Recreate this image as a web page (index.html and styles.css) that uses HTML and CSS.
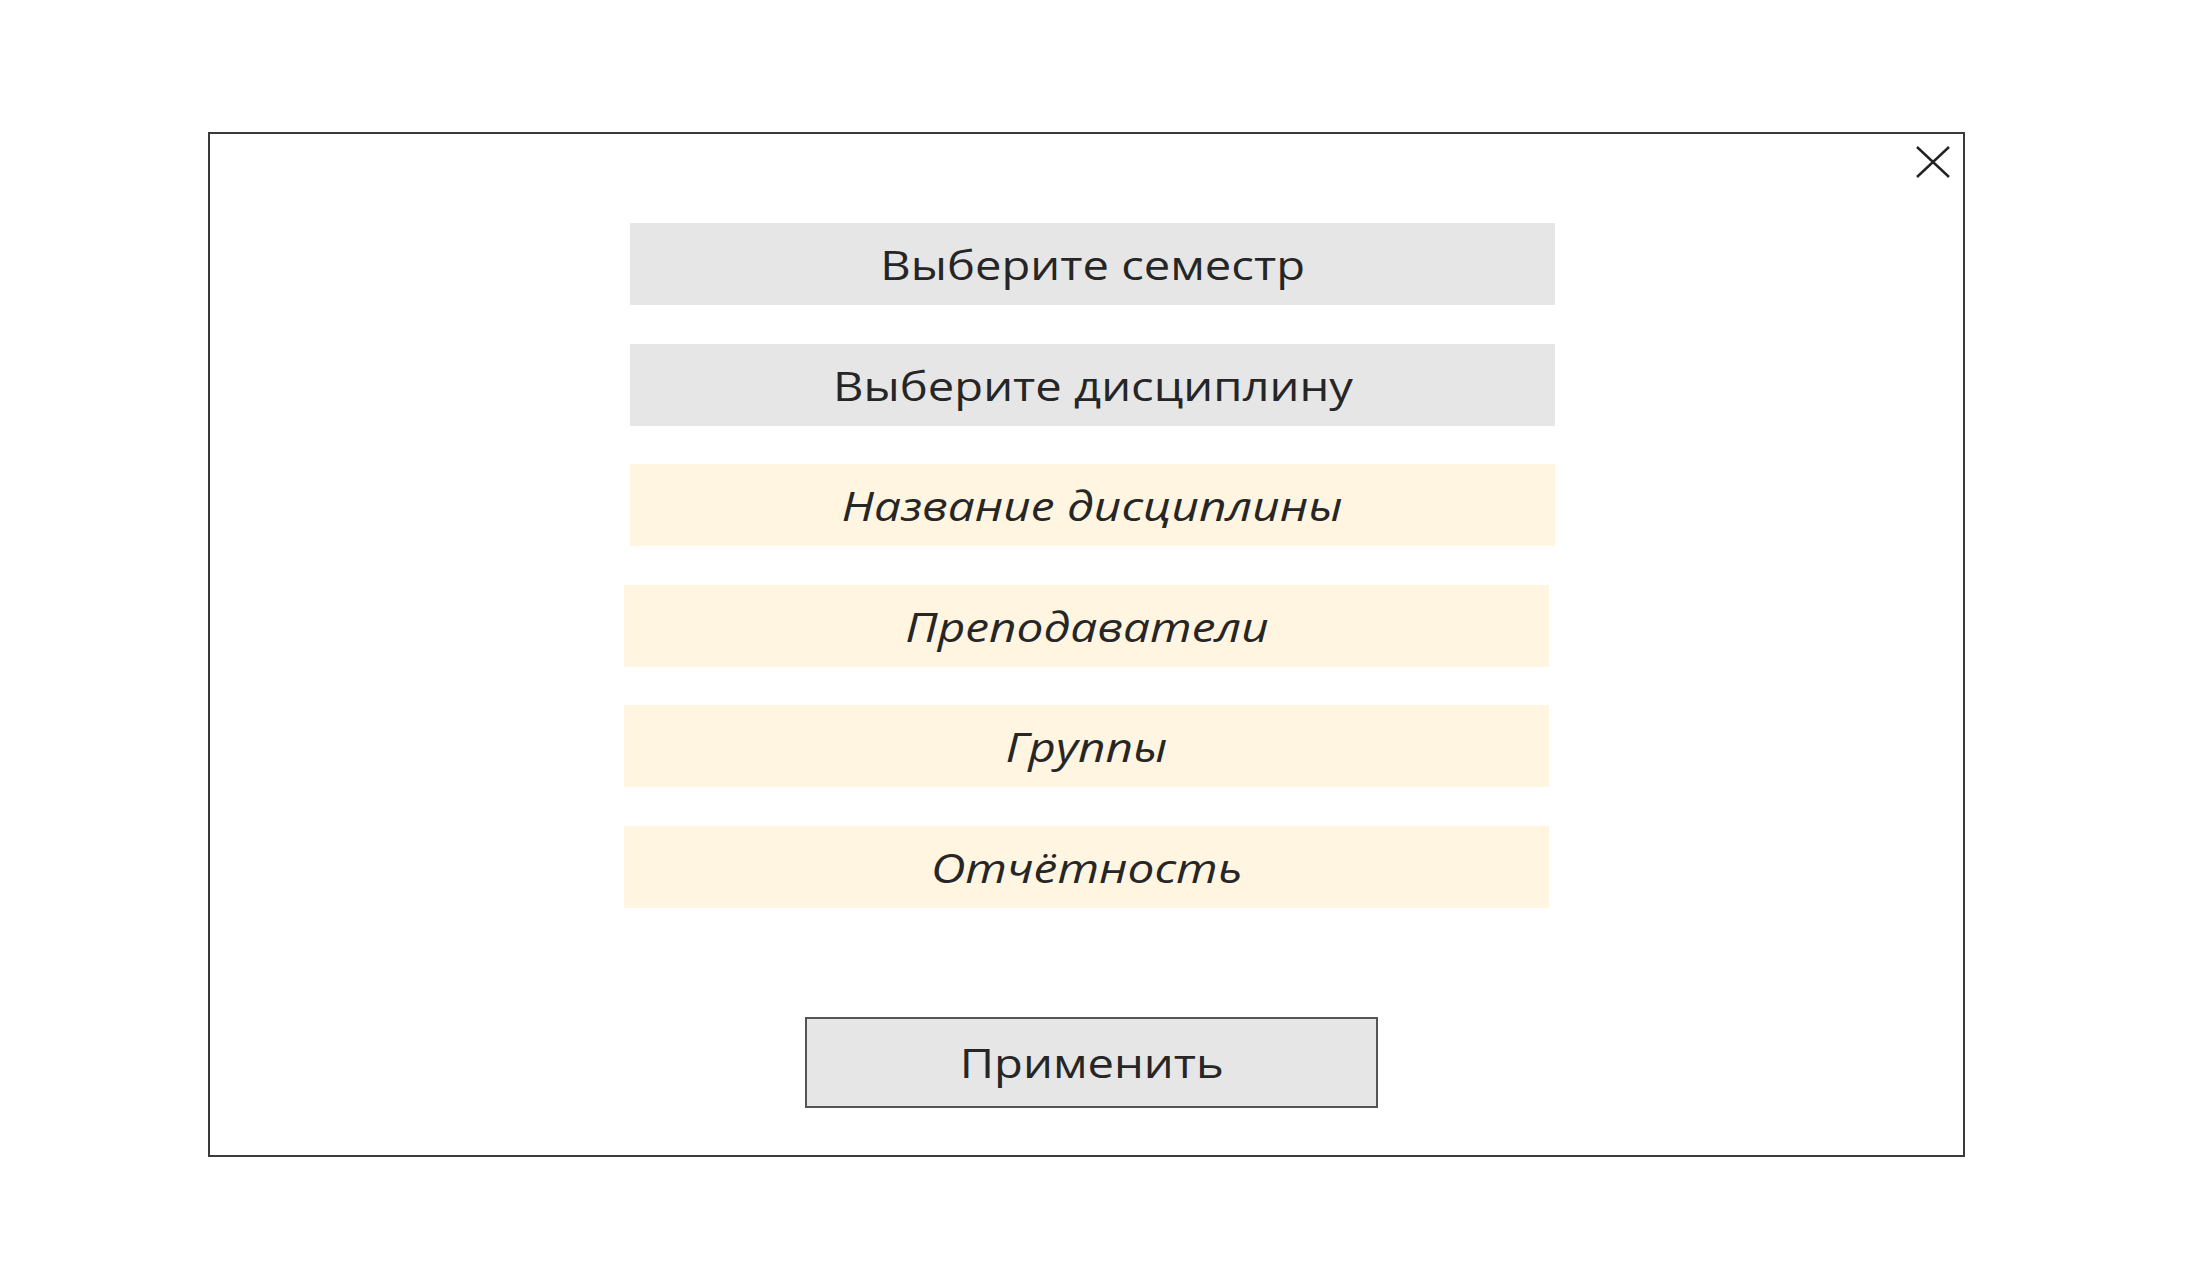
FILE: index.html
```html
<!DOCTYPE html>
<html lang="ru">
<head>
<meta charset="utf-8">
<title>Фильтр</title>
<link rel="stylesheet" href="styles.css">
</head>
<body>
<div class="dialog">
  <button class="close" aria-label="Закрыть">
    <svg width="34" height="32" viewBox="0 0 34 32"><path d="M1 1 L33 31 M33 1 L1 31" stroke="#222" stroke-width="2.4" fill="none"/></svg>
  </button>
  <div class="fields">
    <div class="field select"><span class="label">Выберите семестр</span></div>
    <div class="field select"><span class="label">Выберите дисциплину</span></div>
    <div class="field info"><span class="label">Название дисциплины</span></div>
    <div class="field info shifted"><span class="label">Преподаватели</span></div>
    <div class="field info shifted"><span class="label">Группы</span></div>
    <div class="field info shifted"><span class="label">Отчётность</span></div>
  </div>
  <div class="actions">
    <button class="apply"><span class="label">Применить</span></button>
  </div>
</div>
</body>
</html>
```
FILE: styles.css
```css
html, body {
  margin: 0;
  padding: 0;
  background: #ffffff;
}
body {
  font-family: "Open Sans", "Noto Sans", sans-serif;
  color: #262626;
  padding: 132px 0 0 208px;
}
.dialog {
  position: relative;
  box-sizing: border-box;
  width: 1757px;
  height: 1025px;
  border: 2px solid #3a3a3a;
  background: #ffffff;
}
.close {
  position: absolute;
  top: 12px;
  right: 13px;
  width: 34px;
  height: 32px;
  padding: 0;
  border: 0;
  background: transparent;
  display: flex;
}
.label {
  display: inline-block;
  transform: scaleX(1.15);
  white-space: nowrap;
}
.fields {
  display: flex;
  flex-direction: column;
  gap: 38.6px;
  padding: 89px 0 0 420px;
}
.field {
  width: 925px;
  height: 82px;
  display: flex;
  align-items: center;
  justify-content: center;
  font-size: 41px;
  color: #262626;
}
.select {
  background: #e6e6e6;
}
.info {
  background: #fff5e1;
  font-style: italic;
}
.info .label {
  transform: scaleX(1.165);
}
.shifted {
  margin-left: -6px;
}
.actions {
  padding: 109px 0 0 595px;
}
.apply {
  box-sizing: border-box;
  width: 573px;
  height: 91px;
  border: 2px solid #555555;
  background: #e6e6e6;
  font-family: "Open Sans", "Noto Sans", sans-serif;
  font-size: 41px;
  color: #262626;
  padding: 0;
  display: flex;
  align-items: center;
  justify-content: center;
}
```
